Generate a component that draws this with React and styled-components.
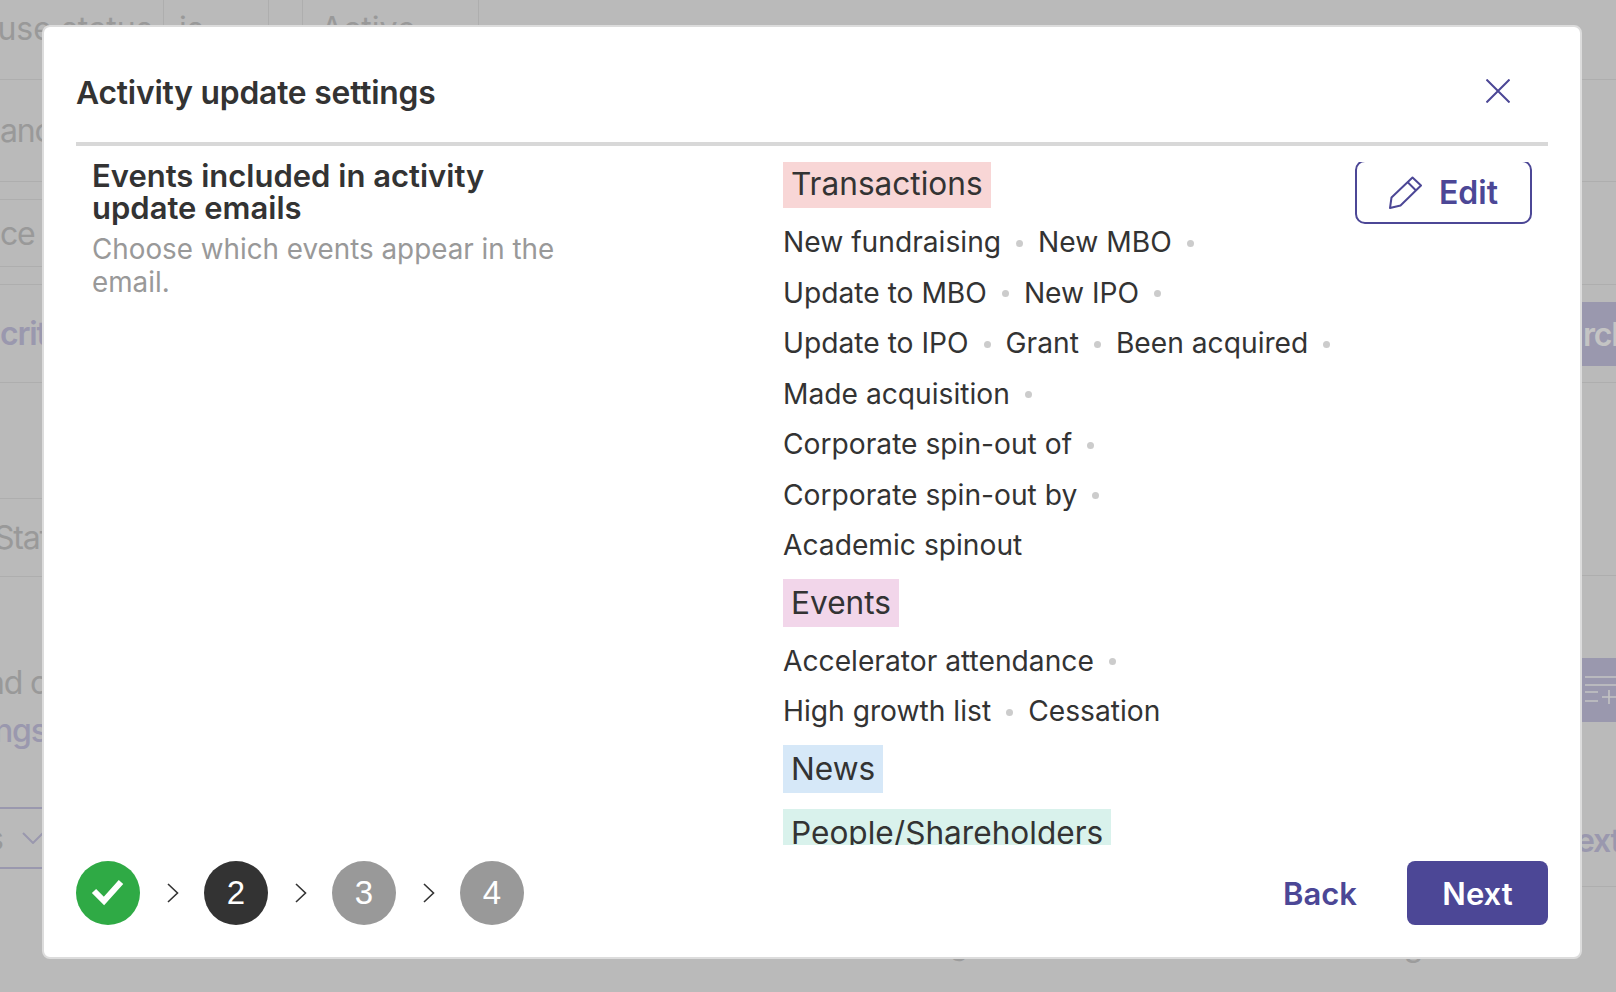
import React from 'react';
import styled, { createGlobalStyle } from 'styled-components';

const purple = '#4c4796';
const dim = '#999999';
const dimPurple = '#9a98ae';
const dimLine = '#aeaeae';

const Global = createGlobalStyle`
  html, body { margin: 0; padding: 0; }
  body { font-family: Inter, "Noto Sans", sans-serif; color: #333; }
`;

const Page = styled.div`
  position: relative;
  width: 1616px;
  height: 992px;
  overflow: hidden;
  background: #bababa;
  display: flex;
  flex-direction: column;
`;

/* dimmed page behind the modal */
const FilterBar = styled.div`
  display: flex;
  height: 80px;
  flex: none;
  box-sizing: border-box;
  border-bottom: 1.5px solid ${dimLine};
  font-size: 32px;
  color: ${dim};
`;
const FilterCell = styled.div`
  width: ${(p) => p.$w}px;
  box-sizing: border-box;
  padding-left: ${(p) => p.$pad || 0}px;
  border-right: 1.5px solid ${dimLine};
  line-height: 58px;
  white-space: nowrap;
  overflow: hidden;
`;
const FilterLead = styled.span`
  margin-left: -41px;
`;
const Behind = styled.div`
  display: flex;
  justify-content: space-between;
  flex: none;
  height: 807px;
`;
const Gutter = styled.div`
  width: ${(p) => p.$w}px;
  display: flex;
  flex-direction: column;
  font-size: 32px;
  letter-spacing: -1.2px;
  color: ${dim};
  white-space: nowrap;
  overflow: hidden;
`;
const GutterRow = styled.div`
  flex: none;
  height: ${(p) => p.$h}px;
  box-sizing: border-box;
  display: flex;
  align-items: center;
  border-bottom: ${(p) => (p.$line ? `1.5px solid ${dimLine}` : 'none')};
  color: ${(p) => (p.$purple ? dimPurple : 'inherit')};
  font-weight: ${(p) => (p.$bold ? 600 : 400)};
  padding-top: ${(p) => p.$top || 0}px;
`;
const GutterText = styled.span`
  margin-left: ${(p) => p.$shift || 0}px;
`;
const GutterStack = styled.div`
  flex: none;
  height: 230px;
  box-sizing: border-box;
  padding-top: 82px;
  line-height: 48px;
`;
const FadedLink = styled.div`
  color: ${dimPurple};
  font-weight: 500;
  margin-left: -6px;
`;
const FadedSelect = styled.div`
  flex: none;
  height: 62px;
  box-sizing: border-box;
  display: flex;
  align-items: center;
  gap: 19px;
  border-top: 2px solid ${dimPurple};
  border-bottom: 2px solid ${dimPurple};
`;
const FadedButton = styled.div`
  flex: none;
  height: 64px;
  background: ${dimPurple};
  color: #c4c4c4;
  font-weight: 600;
  display: flex;
  align-items: center;
  padding-left: 7px;
`;
const Descenders = styled.div`
  display: flex;
  font-size: 32px;
  color: #9c9c9c;
  line-height: 60px;
  padding-top: 28px;
`;
const Descender = styled.span`
  margin-left: ${(p) => p.$gap}px;
  font-size: ${(p) => p.$size || 32}px;
`;

/* modal */
const Modal = styled.div`
  position: absolute;
  top: 25px;
  left: 42px;
  width: 1540px;
  height: 934px;
  box-sizing: border-box;
  padding: 0 32px 32px;
  background: #fff;
  border: 2px solid #dcdcdc;
  border-radius: 8px;
  display: flex;
  flex-direction: column;
`;
const Header = styled.header`
  flex: none;
  height: 119px;
  box-sizing: border-box;
  padding-top: 16px;
  border-bottom: 4px solid #d8d8d8;
  display: flex;
  align-items: center;
  justify-content: space-between;
`;
const Title = styled.h1`
  margin: 0;
  font-size: 31.8px;
  font-weight: 600;
  letter-spacing: -0.2px;
`;
const CloseButton = styled.button`
  border: 0;
  background: none;
  padding: 0;
  margin: 0 38px 3px 0;
  display: flex;
`;
const Scroller = styled.div`
  position: relative;
  flex: 1;
  margin-top: 16px;
  overflow: hidden;
  display: grid;
  grid-template-columns: 707px 1fr;
`;
const Intro = styled.div`
  padding-left: 16px;
`;
const IntroTitle = styled.h2`
  margin: -2px 0 0;
  width: 480px;
  font-size: 31px;
  line-height: 32px;
  font-weight: 600;
`;
const IntroText = styled.p`
  margin: 9px 0 0;
  width: 470px;
  font-size: 27.8px;
  line-height: 33px;
  color: ${dim};
`;
const Groups = styled.div`
  margin-top: -2px;
`;
const Group = styled.section`
  margin-bottom: ${(p) => (p.$empty ? 16 : 8)}px;
`;
const Tag = styled.div`
  display: inline-block;
  height: 48px;
  padding: 0 8px;
  font-size: 31.6px;
  line-height: 48px;
  vertical-align: top;
  background: ${(p) => p.$bg};
`;
const TagLine = styled.div`
  margin-bottom: 9px;
  height: 48px;
`;
const ItemRow = styled.div`
  display: flex;
  align-items: center;
  height: 50.5px;
  font-size: 28.2px;
  white-space: nowrap;
`;
const Dot = styled.span`
  width: 7px;
  height: 7px;
  margin: 2px 15px 0;
  border-radius: 50%;
  background: #cccccc;
`;
const EditButton = styled.button`
  position: absolute;
  top: -2px;
  right: 16px;
  width: 177px;
  height: 64px;
  box-sizing: border-box;
  padding: 0;
  display: flex;
  align-items: center;
  justify-content: center;
  gap: 17px;
  font: 600 32px Inter, sans-serif;
  color: ${purple};
  background: #fff;
  border: 2px solid ${purple};
  border-radius: 10px;
`;
const Footer = styled.footer`
  flex: none;
  height: 64px;
  margin-top: 16px;
  display: flex;
  align-items: center;
  justify-content: space-between;
`;
const Steps = styled.div`
  display: flex;
  align-items: center;
`;
const Step = styled.div`
  width: 64px;
  height: 64px;
  border-radius: 50%;
  display: flex;
  align-items: center;
  justify-content: center;
  background: ${(p) => p.$bg};
  color: #fff;
  font: 33px "Liberation Sans", sans-serif;
`;
const StepArrow = styled.svg`
  width: 12px;
  height: 20px;
  margin: 0 25px 0 27px;
`;
const Actions = styled.div`
  display: flex;
  align-items: center;
  gap: 50px;
`;
const BackLink = styled.button`
  border: 0;
  background: none;
  padding: 0;
  font: 600 31px Inter, sans-serif;
  color: ${purple};
`;
const NextButton = styled.button`
  width: 141px;
  height: 64px;
  border: 0;
  padding: 0;
  border-radius: 8px;
  background: ${purple};
  color: #fff;
  font: 600 31px Inter, sans-serif;
`;

const groups = [
  {
    name: 'Transactions',
    bg: '#f8d6d6',
    rows: [
      ['New fundraising', 'New MBO', ''],
      ['Update to MBO', 'New IPO', ''],
      ['Update to IPO', 'Grant', 'Been acquired', ''],
      ['Made acquisition', ''],
      ['Corporate spin-out of', ''],
      ['Corporate spin-out by', ''],
      ['Academic spinout'],
    ],
  },
  {
    name: 'Events',
    bg: '#f2d6ea',
    rows: [
      ['Accelerator attendance', ''],
      ['High growth list', 'Cessation'],
    ],
  },
  { name: 'News', bg: '#d6e8f8', rows: [] },
  { name: 'People/Shareholders', bg: '#d9f2ec', rows: [] },
];

function Chevron() {
  return (
    <StepArrow viewBox="0 0 12 20" fill="none" stroke="#333" strokeWidth="1.6">
      <path d="M1 1l9.5 9L1 19" />
    </StepArrow>
  );
}

function Row({ items }) {
  return (
    <ItemRow>
      {items.map((item, i) => (
        <React.Fragment key={i}>
          {item}
          {i < items.length - 1 && <Dot />}
        </React.Fragment>
      ))}
    </ItemRow>
  );
}

export default function App() {
  return (
    <Page>
      <Global />
      <FilterBar>
        <FilterCell $w={164}>
          <FilterLead>Pause status</FilterLead>
        </FilterCell>
        <FilterCell $w={105} $pad={15}>is</FilterCell>
        <FilterCell $w={34} />
        <FilterCell $w={176} $pad={18}>Active</FilterCell>
      </FilterBar>
      <Behind>
        <Gutter $w={60}>
          <GutterRow $h={102} $line><GutterText>ance</GutterText></GutterRow>
          <GutterRow $h={18} $line />
          <GutterRow $h={67} $line><GutterText>ce</GutterText></GutterRow>
          <GutterRow $h={18} $line />
          <GutterRow $h={98} $line $purple $bold><GutterText>criteria</GutterText></GutterRow>
          <GutterRow $h={116} $line />
          <GutterRow $h={78} $line><GutterText $shift={-6}>Status</GutterText></GutterRow>
          <GutterStack>
            <div><GutterText $shift={-14}>nd other</GutterText></div>
            <FadedLink>ngs more</FadedLink>
          </GutterStack>
          <FadedSelect>
            <GutterText $shift={-13}>s</GutterText>
            <svg width="22" height="12" viewBox="0 0 22 12" fill="none" stroke={dimPurple} strokeWidth="2">
              <path d="M1 1l10 10L21 1" />
            </svg>
          </FadedSelect>
        </Gutter>
        <Gutter $w={40}>
          <GutterRow $h={102} $line />
          <GutterRow $h={103} $line />
          <GutterRow $h={17} />
          <FadedButton>rch</FadedButton>
          <GutterRow $h={17} $line />
          <GutterRow $h={193} $line />
          <GutterRow $h={82} />
          <FadedButton>
            <svg width="33" height="32" viewBox="0 0 33 32" fill="none" stroke="#c4c4c4" strokeWidth="1.6">
              <path d="M2 3h31M2 11h31M2 18h13M2 27h13M19 23h14M26 16v14" />
            </svg>
          </FadedButton>
          <GutterRow $h={165} $line $purple $bold $top={72}>
            <GutterText>ext</GutterText>
          </GutterRow>
        </Gutter>
      </Behind>
      <Descenders>
        <Descender $gap={950} $size={29}>g</Descender>
        <Descender $gap={436}>g</Descender>
      </Descenders>

      <Modal>
        <Header>
          <Title>Activity update settings</Title>
          <CloseButton aria-label="Close">
            <svg width="24" height="24" viewBox="0 0 24 24" fill="none" stroke={purple} strokeWidth="2">
              <path d="M0.5 0.5l23 23M23.5 0.5l-23 23" />
            </svg>
          </CloseButton>
        </Header>
        <Scroller>
          <Intro>
            <IntroTitle>Events included in activity update emails</IntroTitle>
            <IntroText>Choose which events appear in the email.</IntroText>
          </Intro>
          <Groups>
            {groups.map((group) => (
              <Group key={group.name} $empty={group.rows.length === 0}>
                <TagLine>
                  <Tag $bg={group.bg}>{group.name}</Tag>
                </TagLine>
                {group.rows.map((items, i) => (
                  <Row key={i} items={items} />
                ))}
              </Group>
            ))}
          </Groups>
          <EditButton>
            <svg width="33" height="33" viewBox="0 0 33 33" fill="none" stroke={purple} strokeWidth="2" strokeLinejoin="round">
              <path d="M2.5 21.5L23.5 1.5l8.5 8L11.5 29.5 1 32z" />
              <path d="M18.5 6l8.5 8.5" />
            </svg>
            Edit
          </EditButton>
        </Scroller>
        <Footer>
          <Steps>
            <Step $bg="#2faa45">
              <svg width="64" height="64" viewBox="0 0 64 64" fill="none" stroke="#fff" strokeWidth="6">
                <path d="M18 30l10 10 17-19" />
              </svg>
            </Step>
            <Chevron />
            <Step $bg="#333333">2</Step>
            <Chevron />
            <Step $bg="#999999">3</Step>
            <Chevron />
            <Step $bg="#999999">4</Step>
          </Steps>
          <Actions>
            <BackLink>Back</BackLink>
            <NextButton>Next</NextButton>
          </Actions>
        </Footer>
      </Modal>
    </Page>
  );
}
